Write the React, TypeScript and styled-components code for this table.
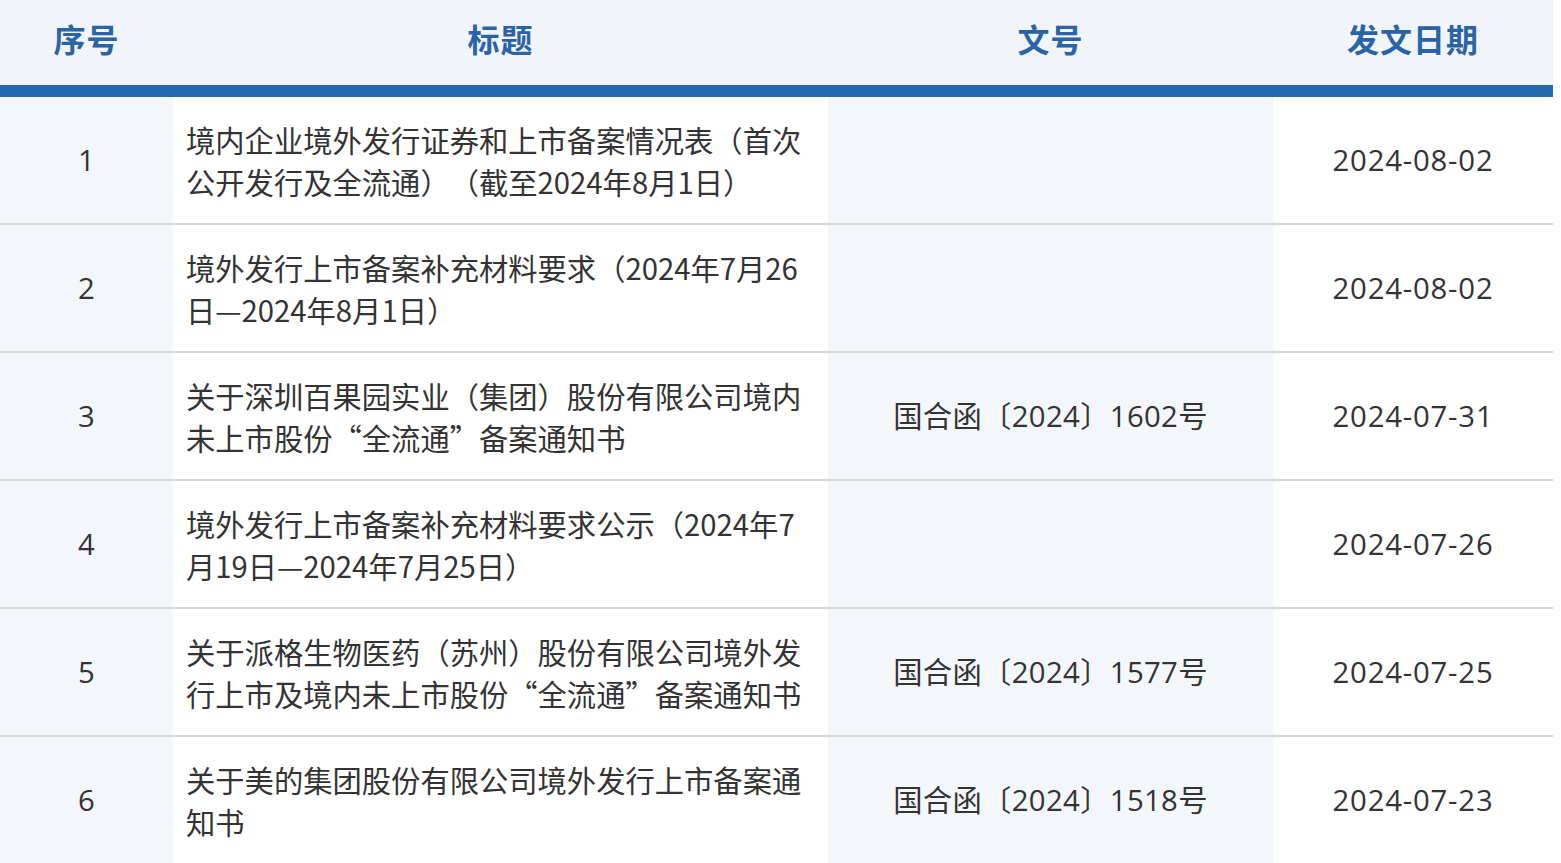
import styled, { createGlobalStyle } from 'styled-components'

type Row = {
  no: number
  title: string
  docNo: string
  date: string
}

const rows: Row[] = [
  { no: 1, title: '境内企业境外发行证券和上市备案情况表（首次公开发行及全流通）（截至2024年8月1日）', docNo: '', date: '2024-08-02' },
  { no: 2, title: '境外发行上市备案补充材料要求（2024年7月26日—2024年8月1日）', docNo: '', date: '2024-08-02' },
  { no: 3, title: '关于深圳百果园实业（集团）股份有限公司境内未上市股份“全流通”备案通知书', docNo: '国合函〔2024〕1602号', date: '2024-07-31' },
  { no: 4, title: '境外发行上市备案补充材料要求公示（2024年7月19日—2024年7月25日）', docNo: '', date: '2024-07-26' },
  { no: 5, title: '关于派格生物医药（苏州）股份有限公司境外发行上市及境内未上市股份“全流通”备案通知书', docNo: '国合函〔2024〕1577号', date: '2024-07-25' },
  { no: 6, title: '关于美的集团股份有限公司境外发行上市备案通知书', docNo: '国合函〔2024〕1518号', date: '2024-07-23' },
]

const GlobalStyle = createGlobalStyle`
  html, body {
    margin: 0;
    padding: 0;
    background: #ffffff;
    font-family: "Noto Sans CJK SC", "Noto Sans", sans-serif;
  }
`

const Table = styled.table`
  width: 1553px;
  border-collapse: collapse;
  table-layout: fixed;
`

const HeadRow = styled.tr`
  background: #f1f5fa;
  border-bottom: 12px solid #236bb0;
`

const HeadCell = styled.th<{ $w: number }>`
  width: ${p => p.$w}px;
  height: 75px;
  padding: 0 0 10px;
  text-align: center;
  vertical-align: middle;
  font-size: 32px;
  font-weight: 700;
  color: #2a63a6;
  letter-spacing: 1px;
`

const BodyRow = styled.tr`
  border-bottom: 2px solid #d6d6d6;
`

const Cell = styled.td<{ $shade?: boolean; $left?: boolean; $latin?: boolean; $spread?: number }>`
  height: 125px;
  padding: ${p => (p.$left ? '0 20px 1px 13px' : '0 0 1px')};
  background: ${p => (p.$shade ? '#f3f7fb' : '#ffffff')};
  text-align: ${p => (p.$left ? 'left' : 'center')};
  vertical-align: middle;
  font-family: ${p => (p.$latin ? '"Open Sans", "Noto Sans CJK SC", sans-serif' : '"Noto Sans CJK SC", sans-serif')};
  font-size: 29.3px;
  line-height: 42px;
  letter-spacing: ${p => p.$spread ?? 0}px;
  color: #333333;
  text-spacing-trim: space-all;
`

export default function App() {
  return (
    <>
      <GlobalStyle />
      <Table>
        <thead>
          <HeadRow>
            <HeadCell $w={173}>序号</HeadCell>
            <HeadCell $w={655}>标题</HeadCell>
            <HeadCell $w={445}>文号</HeadCell>
            <HeadCell $w={280}>发文日期</HeadCell>
          </HeadRow>
        </thead>
        <tbody>
          {rows.map(r => (
            <BodyRow key={r.no}>
              <Cell $shade $latin>{r.no}</Cell>
              <Cell $left>{r.title}</Cell>
              <Cell $shade $latin $spread={0.35}>{r.docNo}</Cell>
              <Cell $latin $spread={0.8}>{r.date}</Cell>
            </BodyRow>
          ))}
        </tbody>
      </Table>
    </>
  )
}
